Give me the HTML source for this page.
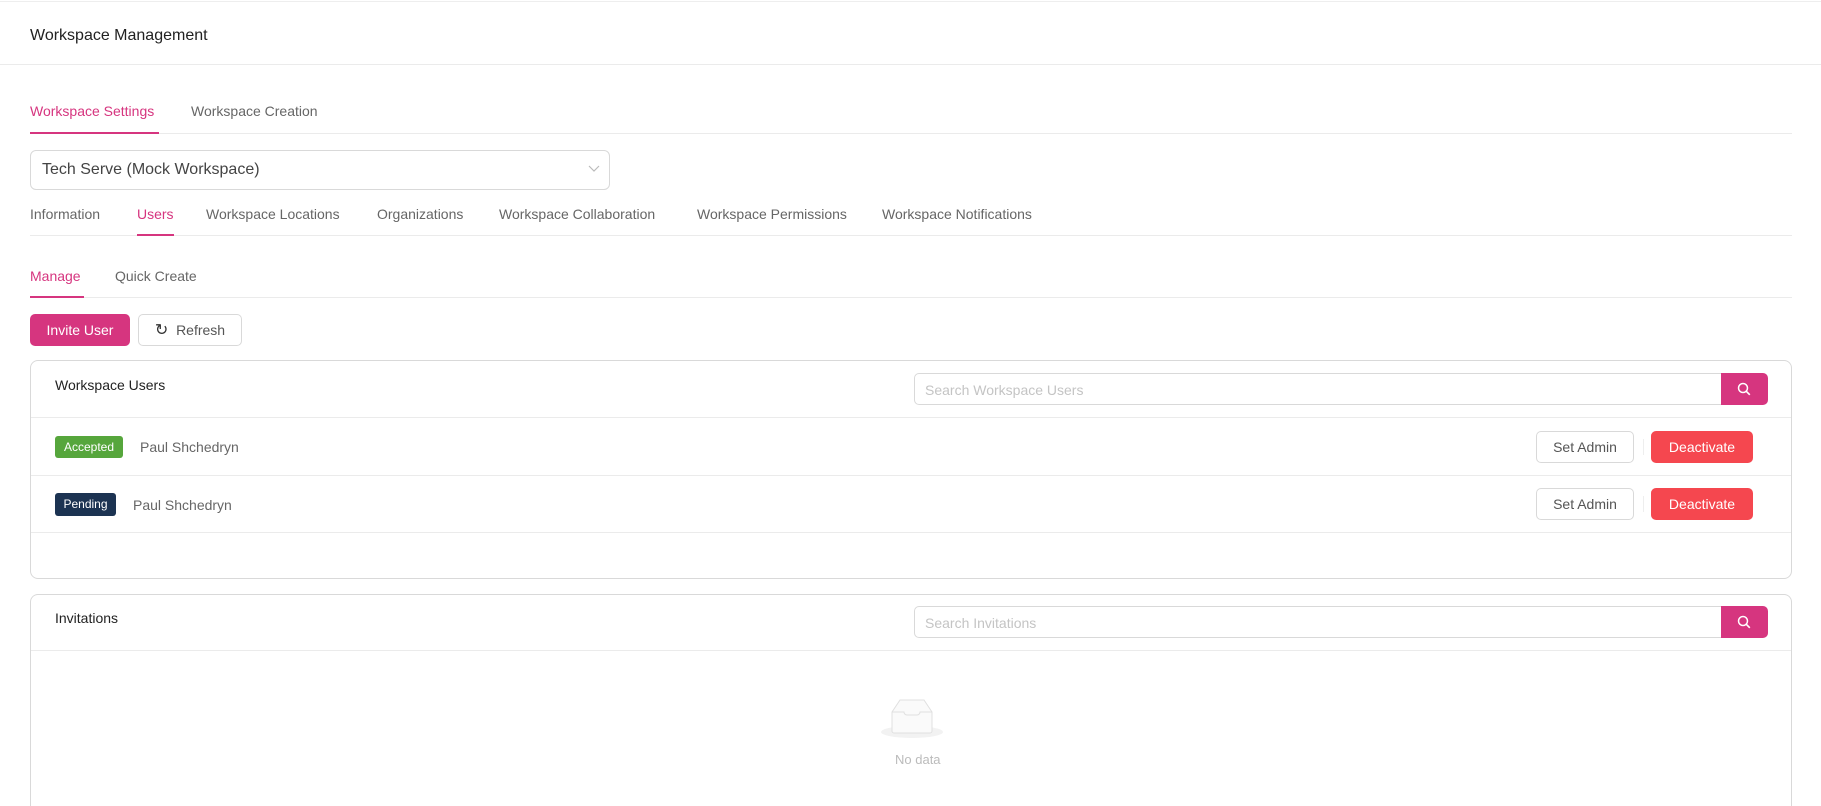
<!DOCTYPE html>
<html style="height:806px;overflow:hidden"><head><meta charset="utf-8"><style>
*{margin:0;padding:0;box-sizing:border-box}
body{width:1821px;height:806px;overflow:hidden;background:#fff;font-family:"Liberation Sans",sans-serif;color:#555;position:relative}
.a{position:absolute;white-space:nowrap}
.line{position:absolute;height:1px;background:#ebebeb}
.ul{position:absolute;height:2px;background:#d6357f}
.t{font-size:14px;color:#666}
.t.pink{color:#d6357f}
.card{position:absolute;left:30px;width:1762px;border:1px solid #d9d9d9;border-radius:8px}
.search{position:absolute;left:883px;width:808px;height:32px;border:1px solid #d9d9d9;border-radius:5px 0 0 5px;font-size:14px;color:#c4c4c4;padding:8px 10px}
.sbtn{position:absolute;left:1690px;width:47px;height:32px;background:#d6357f;border-radius:0 5px 5px 0}
.btnw{position:absolute;border:1px solid #d9d9d9;border-radius:5px;background:#fff;font-size:14px;color:#555;text-align:center}
.btnr{position:absolute;background:#f5474f;border-radius:5px;color:#fff;font-size:14px;text-align:center}
</style></head><body>
<div class="line" style="left:0;top:1px;width:1821px;background:#eee"></div>
<div class="a" style="left:30px;top:27px;font-size:16px;color:#222">Workspace Management</div>
<div class="line" style="left:0;top:64px;width:1821px"></div>

<div class="a t pink" style="left:30px;top:103px">Workspace Settings</div>
<div class="a t" style="left:191px;top:103px">Workspace Creation</div>
<div class="line" style="left:30px;top:133px;width:1762px"></div>
<div class="ul" style="left:30px;top:132px;width:129px"></div>

<div class="a" style="left:30px;top:150px;width:580px;height:40px;border:1px solid #d9d9d9;border-radius:6px"></div>
<div class="a" style="left:42px;top:161px;font-size:16px;color:#444">Tech Serve (Mock Workspace)</div>
<svg class="a" style="left:588px;top:165px" width="12" height="8" viewBox="0 0 12 8"><path d="M1 1l5 5 5-5" fill="none" stroke="#bbb" stroke-width="1.2"/></svg>

<div class="a t" style="left:30px;top:206px">Information</div>
<div class="a t pink" style="left:137px;top:206px">Users</div>
<div class="a t" style="left:206px;top:206px">Workspace Locations</div>
<div class="a t" style="left:377px;top:206px">Organizations</div>
<div class="a t" style="left:499px;top:206px">Workspace Collaboration</div>
<div class="a t" style="left:697px;top:206px">Workspace Permissions</div>
<div class="a t" style="left:882px;top:206px">Workspace Notifications</div>
<div class="line" style="left:30px;top:235px;width:1762px"></div>
<div class="ul" style="left:137px;top:234px;width:37px"></div>

<div class="a t pink" style="left:30px;top:268px">Manage</div>
<div class="a t" style="left:115px;top:268px">Quick Create</div>
<div class="line" style="left:30px;top:297px;width:1762px"></div>
<div class="ul" style="left:30px;top:296px;width:54px"></div>

<div class="a" style="left:30px;top:314px;width:100px;height:32px;background:#d6357f;border-radius:5px;color:#fff;font-size:14px;text-align:center;line-height:32px">Invite User</div>
<div class="btnw" style="left:138px;top:314px;width:104px;height:32px;line-height:30px"><span style="font-size:16px;color:#333">&#8635;</span>&nbsp; Refresh</div>

<div class="card" style="top:360px;height:219px">
 <div class="a" style="left:24px;top:16px;font-size:14px;color:#222">Workspace Users</div>
 <div class="search" style="top:12px">Search Workspace Users</div>
 <div class="sbtn" style="top:12px"><svg width="47" height="32"><circle cx="22" cy="15" r="4.5" fill="none" stroke="#fff" stroke-width="1.5"/><path d="M25.3 18.3l3.5 3.5" stroke="#fff" stroke-width="1.6"/></svg></div>
 <div class="line" style="left:0;top:56px;width:1760px"></div>
 <div class="a" style="left:24px;top:75px;width:68px;height:22px;background:#56a63c;border-radius:3px;color:#fff;font-size:12px;text-align:center;line-height:22px">Accepted</div>
 <div class="a t" style="left:109px;top:78px">Paul Shchedryn</div>
 <div class="btnw" style="left:1505px;top:70px;width:98px;height:32px;line-height:30px">Set Admin</div>
 <div class="a" style="left:1612px;top:78px;width:1px;height:16px;background:#eee"></div>
 <div class="btnr" style="left:1620px;top:70px;width:102px;height:32px;line-height:32px">Deactivate</div>
 <div class="line" style="left:0;top:114px;width:1760px"></div>
 <div class="a" style="left:24px;top:132px;width:61px;height:23px;background:#1c3352;border-radius:3px;color:#fff;font-size:12px;text-align:center;line-height:23px">Pending</div>
 <div class="a t" style="left:102px;top:136px">Paul Shchedryn</div>
 <div class="btnw" style="left:1505px;top:127px;width:98px;height:32px;line-height:30px">Set Admin</div>
 <div class="a" style="left:1612px;top:135px;width:1px;height:16px;background:#eee"></div>
 <div class="btnr" style="left:1620px;top:127px;width:102px;height:32px;line-height:32px">Deactivate</div>
 <div class="line" style="left:0;top:171px;width:1760px"></div>
</div>

<div class="card" style="top:594px;height:230px;border-bottom:none;border-radius:8px 8px 0 0">
 <div class="a" style="left:24px;top:15px;font-size:14px;color:#222">Invitations</div>
 <div class="search" style="top:11px">Search Invitations</div>
 <div class="sbtn" style="top:11px"><svg width="47" height="32"><circle cx="22" cy="15" r="4.5" fill="none" stroke="#fff" stroke-width="1.5"/><path d="M25.3 18.3l3.5 3.5" stroke="#fff" stroke-width="1.6"/></svg></div>
 <div class="line" style="left:0;top:55px;width:1760px"></div>
 <svg class="a" style="left:849px;top:103px" width="64" height="42" viewBox="0 0 64 42"><ellipse cx="32" cy="34" rx="31" ry="6" fill="#f2f2f2"/><path d="M12 14L20 2h24l8 12v19a2 2 0 0 1-2 2H14a2 2 0 0 1-2-2z" fill="#fafafa" stroke="#e0e0e0"/><path d="M12 14h12a3 3 0 0 0 3 3h10a3 3 0 0 0 3-3h12" fill="none" stroke="#e0e0e0"/></svg>
 <div class="a" style="left:864px;top:157px;font-size:13px;color:#bbb">No data</div>
</div>
</body></html>
